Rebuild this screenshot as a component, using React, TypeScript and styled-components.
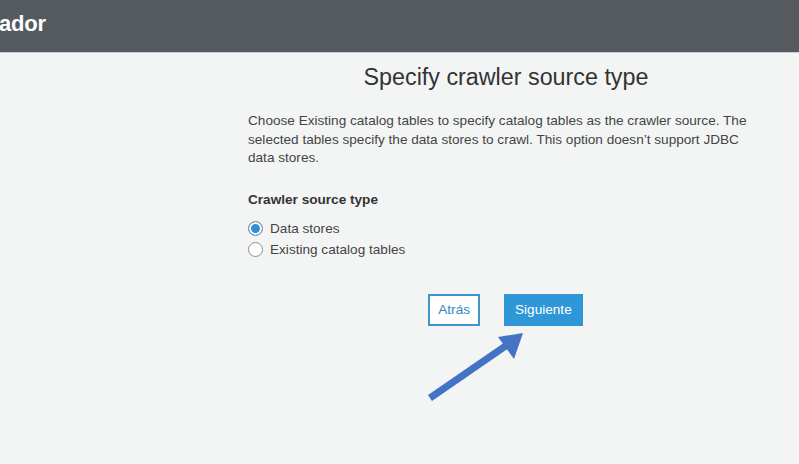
import React from "react";
import styled, { createGlobalStyle } from "styled-components";

const Global = createGlobalStyle`
  html, body { margin: 0; padding: 0; background: #f3f5f5; }
  body { font-family: "Liberation Sans", Arial, sans-serif; }
`;

const Page = styled.div`
  position: relative;
  width: 799px;
  height: 464px;
  overflow: hidden;
  background: #f3f5f5;
`;

const Header = styled.header`
  height: 52px;
  background: #545a5d;
  border-bottom: 1px solid #c9ccd0;
  display: flex;
  align-items: center;
`;

const HeaderTitle = styled.h1`
  margin: 0 0 0 -1px;
  color: #ffffff;
  font-size: 22px;
  font-weight: 700;
  letter-spacing: -0.2px;
  padding-bottom: 4px;
`;

const Main = styled.main`
  padding: 10px 0 0 248px;
`;

const Column = styled.section`
  width: 512px;
  display: flex;
  flex-direction: column;
`;

const Title = styled.h2`
  margin: 0;
  padding-left: 4px;
  text-align: center;
  font-size: 23.3px;
  font-weight: 400;
  color: #333;
  line-height: 28px;
`;

const Description = styled.p`
  margin: 21px 0 0;
  font-size: 13.6px;
  line-height: 18.5px;
  color: #444;
`;

const Label = styled.div`
  margin-top: 24px;
  font-size: 13.6px;
  font-weight: 700;
  color: #333;
`;

const RadioGroup = styled.div`
  margin-top: 14px;
  display: flex;
  flex-direction: column;
  gap: 5px;
`;

const RadioRow = styled.label`
  display: flex;
  align-items: center;
  gap: 7px;
  font-size: 13.6px;
  color: #444;
  height: 16px;
`;

const RadioDot = styled.span<{ $checked?: boolean }>`
  box-sizing: border-box;
  width: 15px;
  height: 15px;
  border-radius: 50%;
  border: 1px solid #8a8f94;
  background: ${(p) => (p.$checked ? "#2c8fd8" : "#fff")};
  box-shadow: ${(p) => (p.$checked ? "inset 0 0 0 2px #fff" : "none")};
  flex: none;
`;

const Buttons = styled.div`
  margin-top: 36px;
  display: flex;
  justify-content: center;
  gap: 24px;
  padding-left: 3px;
`;

const Button = styled.button<{ $primary?: boolean }>`
  box-sizing: border-box;
  height: 32px;
  padding: 0 ${(p) => (p.$primary ? "9px" : "8px")};
  font-family: "Liberation Sans", Arial, sans-serif;
  font-size: 13.6px;
  border: 2px solid ${(p) => (p.$primary ? "#2f96d7" : "#3f95cc")};
  background: ${(p) => (p.$primary ? "#2f96d7" : "#fff")};
  color: ${(p) => (p.$primary ? "#fff" : "#3585c0")};
  cursor: pointer;
`;

const Arrow = styled.svg`
  position: absolute;
  left: 420px;
  top: 325px;
`;

export default function App() {
  return (
    <Page>
      <Global />
      <Header>
        <HeaderTitle>ador</HeaderTitle>
      </Header>
      <Main>
        <Column>
          <Title>Specify crawler source type</Title>
          <Description>
            Choose Existing catalog tables to specify catalog tables as the crawler source. The
            selected tables specify the data stores to crawl. This option doesn’t support JDBC data
            stores.
          </Description>
          <Label>Crawler source type</Label>
          <RadioGroup>
            <RadioRow>
              <RadioDot $checked />
              Data stores
            </RadioRow>
            <RadioRow>
              <RadioDot />
              Existing catalog tables
            </RadioRow>
          </RadioGroup>
          <Buttons>
            <Button>Atrás</Button>
            <Button $primary>Siguiente</Button>
          </Buttons>
        </Column>
      </Main>
      <Arrow width="110" height="80" viewBox="0 0 110 80">
        <line x1="10" y1="73" x2="90" y2="18" stroke="#4472c4" strokeWidth="7" />
        <polygon points="103,8 78,12 94,34" fill="#4472c4" />
      </Arrow>
    </Page>
  );
}
